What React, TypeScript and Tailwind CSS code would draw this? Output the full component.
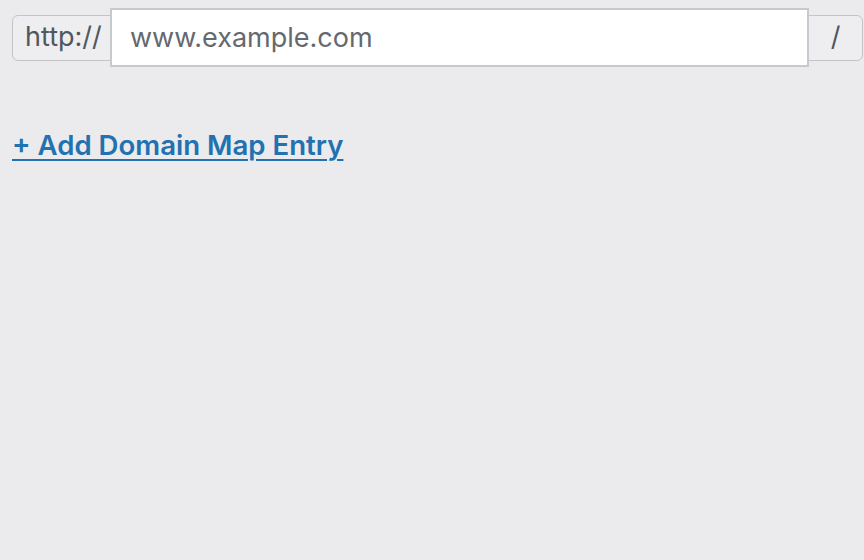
export default function App() {
  return (
    <div className="min-h-[560px] w-full bg-[#ebebed] pl-3 pr-px pt-2 font-['Inter',_'Liberation_Sans',_sans-serif]">
      <div className="flex items-center">
        <span className="flex h-[46px] w-[99px] shrink-0 items-center rounded-l-md border border-[#c3c4c7] bg-[#eeeef0] pl-3 text-[27px] text-[#50575e]">
          http://
        </span>
        <input
          className="z-10 -ml-px h-[59px] flex-1 border-2 border-[#c8c9cc] bg-white px-[18px] text-[27px] text-[#50575e] outline-none placeholder:text-[#646970]"
          placeholder="www.example.com"
        />
        <span className="-ml-px flex h-[46px] w-[55px] shrink-0 items-center justify-center rounded-r-md border border-[#c3c4c7] bg-[#eeeef0] text-[27px] text-[#50575e]">
          /
        </span>
      </div>
      <div className="mt-[58px]">
        <a href="#" className="text-[27.6px] font-semibold text-[#2271b1] underline underline-offset-4 decoration-2">
          + Add Domain Map Entry
        </a>
      </div>
    </div>
  )
}
